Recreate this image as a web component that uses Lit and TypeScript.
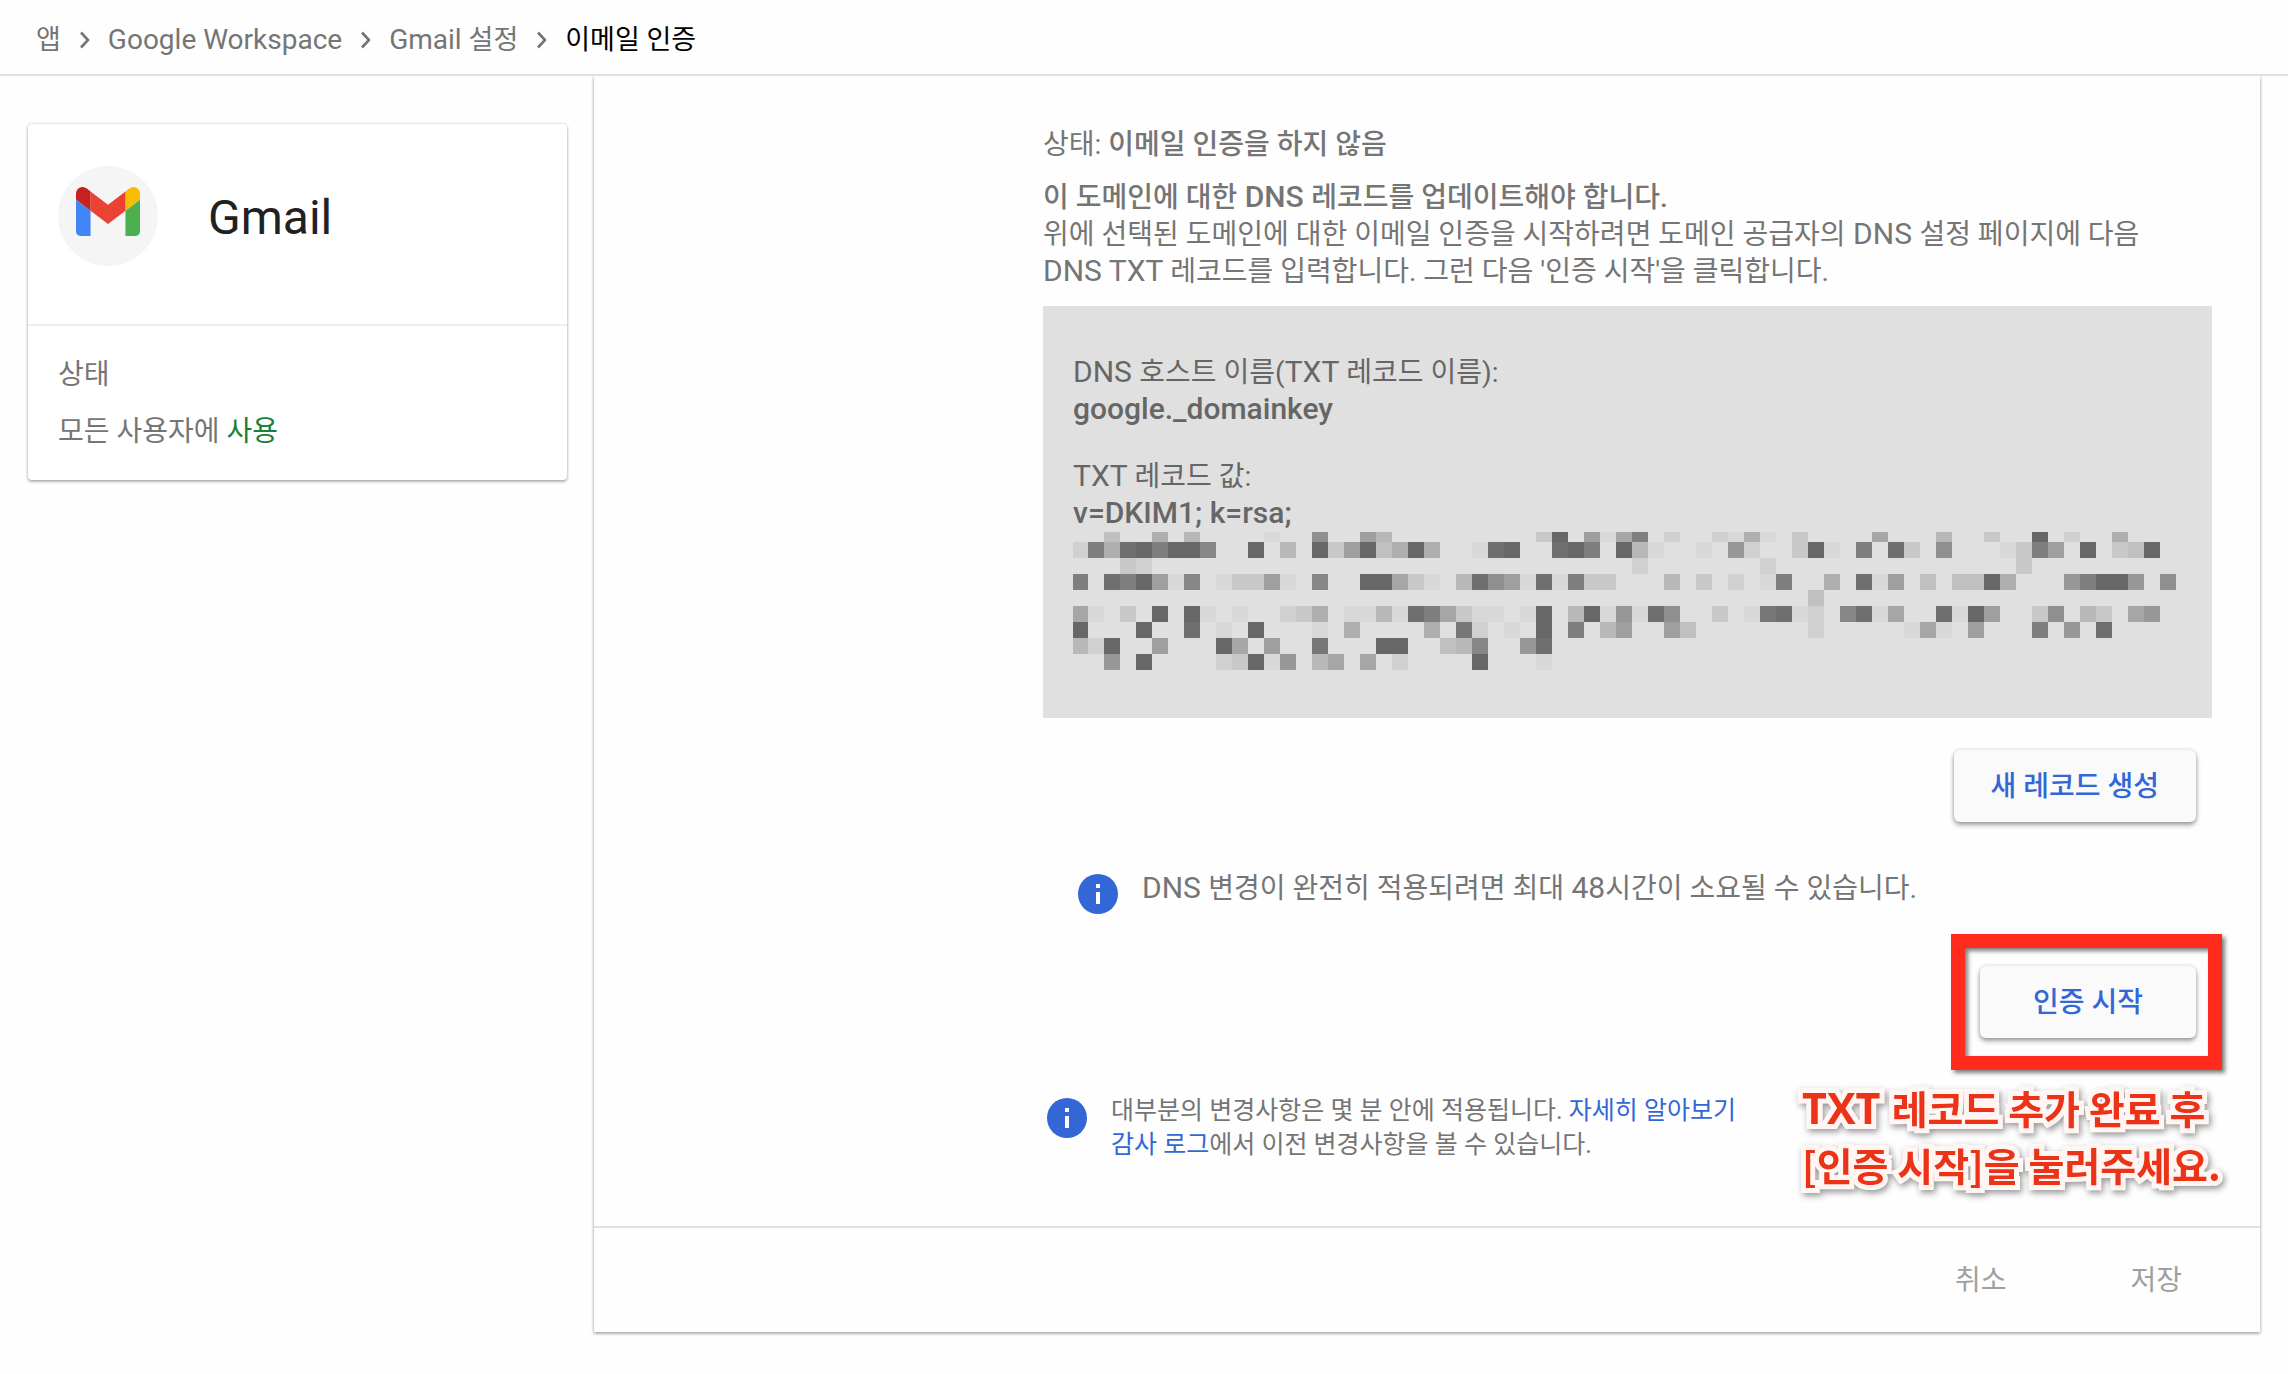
import { LitElement, html, svg, css } from "lit";
import { customElement, property } from "lit/decorators.js";

/* Wraps every Latin run, with the spaces beside it, so that it is set a step larger than the Hangul. */
const mixed = (text: string) =>
  text
    .split(/( ?[A-Za-z0-9](?:[A-Za-z0-9._=; ]*[A-Za-z0-9._=;])? ?)/)
    .map((part, i) => (i % 2 ? html`<span class="latin">${part}</span>` : part));

const CELL = 16;

/* Each row of the mosaic: its top, its height, and "column:darkness" cells (darkness in hex). */
const MOSAIC: Array<[number, number, string]> = [
  [0, 10, "2:4 5:6 7:5 12:1 15:a 18:8 19:5 29:3 30:f 32:8 33:1 34:7 35:c 37:2 40:2 41:1 42:6 43:1 45:3 50:7 54:5 57:3 60:f 62:2 65:6"],
  [10, 16, "0:2 1:c 2:6 3:e 4:f 5:c 6:f 7:f 8:b 11:f 13:5 15:f 16:3 17:8 18:f 19:4 20:6 21:f 22:6 25:1 26:e 27:f 30:e 31:f 32:c 34:f 35:5 36:1 39:1 41:9 42:2 45:3 46:f 47:1 49:c 51:e 52:3 54:a 58:1 59:3 60:c 61:8 63:f 65:3 66:4 67:f"],
  [26, 16, "3:3 4:2 35:2 43:2 59:3"],
  [42, 16, "0:c 2:e 3:c 4:f 5:8 6:1 7:b 9:1 10:3 11:3 12:8 13:1 15:b 18:f 19:f 20:7 21:3 22:1 24:5 25:e 26:a 27:8 28:1 29:e 30:1 31:c 32:3 33:3 37:5 39:3 41:2 43:1 44:c 47:6 49:e 50:1 51:8 53:4 55:4 56:4 57:f 58:6 62:9 63:c 64:f 65:f 66:9 68:a"],
  [58, 16, "46:4"],
  [74, 16, "0:7 1:1 3:3 5:f 7:f 8:1 10:1 13:2 14:3 15:6 17:1 18:1 19:5 20:1 21:e 22:c 23:7 24:3 25:1 26:1 28:1 29:f 31:5 32:f 33:1 34:9 35:1 36:e 37:a 40:3 42:1 43:d 44:e 45:1 46:2 48:b 49:e 50:1 51:7 54:e 55:1 56:f 57:8 60:3 61:a 63:5 64:3 66:7 67:9"],
  [90, 16, "0:f 4:f 7:e 9:1 11:f 15:1 17:6 22:6 24:d 25:2 27:1 29:f 31:c 33:5 34:8 37:8 38:4 46:2 52:1 53:7 54:1 56:8 60:c 62:9 64:e"],
  [106, 16, "0:5 1:2 2:f 5:8 9:f 10:7 12:8 15:d 19:f 20:f 23:4 24:5 25:b 28:9 29:e"],
  [122, 16, "2:9 4:f 9:2 10:3 11:f 12:1 13:9 15:5 16:7 18:7 20:2 25:f 29:1"],
];

const shade = (level: string) => {
  const v = Math.round(224 - parseInt(level, 16) * 8.1);
  return `rgb(${v},${v},${v})`;
};

const base = css`
  * {
    box-sizing: border-box;
  }
  p,
  h1,
  h2 {
    margin: 0;
    font-weight: 400;
    font-size: inherit;
  }
  .latin {
    font-size: 30px;
    line-height: 0;
  }
  a {
    color: #3367d6;
    text-decoration: none;
  }
  svg {
    display: block;
    flex: none;
  }
`;

@customElement("crumb-bar")
class CrumbBar extends LitElement {
  static styles = [
    base,
    css`
      :host {
        display: block;
        position: relative;
        z-index: 1;
        background: #fefefe;
        border-bottom: 2px solid #e0e0e0;
      }
      .list {
        display: flex;
        align-items: center;
        gap: 18px;
        height: 74px;
        margin: 0;
        padding: 6px 36px 0;
        list-style: none;
        font-size: 27px;
        line-height: 36px;
      }
      .item {
        display: flex;
        align-items: center;
        gap: 18px;
      }
      .link {
        color: #757575;
      }
      .latin {
        font-size: 28px;
      }
      .current {
        color: #000;
      }
    `,
  ];

  render() {
    const chevron = html`<svg width="11" height="18" viewBox="0 0 11 18" aria-hidden="true">
      <path d="M2 1.5 9 9l-7 7.5" fill="none" stroke="#757575" stroke-width="2.6" />
    </svg>`;
    return html`<nav aria-label="탐색 경로">
      <ol class="list">
        ${["앱", "Google Workspace", "Gmail 설정"].map(
          (name) => html`<li class="item"><a class="link" href="#">${mixed(name)}</a>${chevron}</li>`
        )}
        <li class="current" aria-current="page">이메일 인증</li>
      </ol>
    </nav>`;
  }
}

@customElement("app-card")
class AppCard extends LitElement {
  static styles = [
    base,
    css`
      :host {
        display: block;
        border-radius: 4px;
        background: #fff;
        box-shadow: 0 0 3px rgba(0, 0, 0, 0.22), 0 2px 3px rgba(0, 0, 0, 0.26);
      }
      .head {
        display: flex;
        align-items: flex-start;
        gap: 50px;
        height: 202px;
        padding: 42px 30px 0;
        border-bottom: 2px solid #eee;
      }
      .logo {
        display: grid;
        justify-items: center;
        width: 100px;
        height: 100px;
        padding-top: 21px;
        border-radius: 50%;
        background: #f5f5f5;
      }
      .name {
        font-size: 48px;
        line-height: 104px;
        color: #212121;
      }
      .body {
        display: flex;
        flex-direction: column;
        gap: 20px;
        padding: 30px;
      }
      .on {
        color: #188038;
      }
    `,
  ];

  render() {
    return html`<div class="head">
        <div class="logo">
          <svg width="64" height="49" viewBox="52 42 88 66" role="img" aria-label="Gmail" preserveAspectRatio="none">
            <path fill="#4285f4" d="M58 108h14V74L52 59v43c0 3.32 2.69 6 6 6" />
            <path fill="#4caf50" d="M120 108h14c3.32 0 6-2.69 6-6V59l-20 15" />
            <path fill="#f9bc05" d="M120 48v26l20-15v-8c0-7.42-8.47-11.65-14.4-7.2" />
            <path fill="#ea4335" d="M72 74V48l24 18 24-18v26L96 92" />
            <path fill="#c5221f" d="M52 51v8l20 15V48l-5.6-4.2c-5.94-4.45-14.4-.22-14.4 7.2" />
          </svg>
        </div>
        <h1 class="name">Gmail</h1>
      </div>
      <div class="body">
        <p>상태</p>
        <p>모든 사용자에 <span class="on">사용</span></p>
      </div>`;
  }
}

@customElement("info-note")
class InfoNote extends LitElement {
  static styles = [
    base,
    css`
      :host {
        display: flex;
        align-items: flex-start;
        gap: 20px;
        line-height: 34px;
      }
    `,
  ];

  render() {
    return html`<svg width="48" height="48" viewBox="0 0 24 24" aria-hidden="true">
        <circle cx="12" cy="12" r="10" fill="#3367d6" />
        <path fill="#fff" d="M11 7h2v2h-2zM11 11h2v6h-2z" />
      </svg>
      <div><slot></slot></div>`;
  }
}

@customElement("dns-record")
class DnsRecord extends LitElement {
  @property() host = "";
  @property() value = "";

  static styles = [
    base,
    css`
      :host {
        display: block;
        padding: 48px 30px;
        background: #e0e0e0;
        color: #666;
      }
      .pair {
        margin: 0 0 30px;
      }
      .pair:last-of-type {
        margin-bottom: 0;
      }
      .data {
        margin: 0;
        font-weight: 500;
      }
      .mosaic {
        max-width: 100%;
      }
    `,
  ];

  render() {
    return html`<dl class="pair">
        <dt>${mixed("DNS 호스트 이름(TXT 레코드 이름):")}</dt>
        <dd class="data">${mixed(this.host)}</dd>
      </dl>
      <dl class="pair">
        <dt>${mixed("TXT 레코드 값:")}</dt>
        <dd class="data">${mixed(this.value)}</dd>
      </dl>
      <svg class="mosaic" width="1103" height="138" viewBox="1 0 1103 138" shape-rendering="crispEdges" aria-hidden="true">
        ${MOSAIC.map(([y, h, cells]) =>
          cells.split(" ").map((cell) => {
            const [col, level] = cell.split(":");
            return svg`<rect x=${Number(col) * CELL} y=${y} width=${CELL} height=${h} fill=${shade(level)} />`;
          })
        )}
      </svg>`;
  }
}

@customElement("app-root")
class AppRoot extends LitElement {
  static styles = [
    base,
    css`
      :host {
        display: block;
        min-height: 100vh;
        background: #fefefe;
        color: #757575;
        font: 400 28px/37px Roboto, "Noto Sans CJK KR", sans-serif;
      }
      .page {
        display: grid;
        grid-template-columns: 539px minmax(0, 1fr);
        align-items: start;
        gap: 27px;
        padding: 0 28px 42px;
      }
      .side {
        padding-top: 48px;
      }
      .panel {
        background: #fefefe;
        box-shadow: 0 0 3px rgba(0, 0, 0, 0.22), 0 2px 3px rgba(0, 0, 0, 0.26);
      }
      .content {
        padding: 50px 48px 64px 449px;
      }
      .strong {
        font-weight: 500;
      }
      .intro {
        margin: 16px 0;
        padding-right: 40px;
      }
      .actions {
        display: flex;
        justify-content: flex-end;
        padding: 32px 16px 48px 0;
      }
      .raised {
        min-width: 216px;
        height: 72px;
        padding: 0 37px;
        border: 0;
        border-radius: 6px;
        background: #fafafa;
        color: #3367d6;
        font: inherit;
        font-weight: 500;
        box-shadow: 0 0 4px rgba(0, 0, 0, 0.14), 0 3px 5px rgba(0, 0, 0, 0.36);
      }
      .inset {
        padding-left: 31px;
        line-height: 37px;
      }
      .marked {
        padding-top: 48px;
        padding-bottom: 56px;
      }
      .target {
        position: relative;
      }
      .frame {
        position: absolute;
        inset: -32px -26px -32px -29px;
        border: 14px solid #ff2b1c;
        filter: drop-shadow(3px 3px 2px rgba(0, 0, 0, 0.5));
        pointer-events: none;
      }
      .callout {
        position: absolute;
        top: 113px;
        right: -26px;
        width: 420px;
        color: #ec3217;
        font-family: "Noto Sans CJK KR", sans-serif;
        font-size: 39px;
        font-weight: 700;
        line-height: 57px;
        white-space: nowrap;
        -webkit-text-stroke: 10px #fff5f3;
        paint-order: stroke fill;
        stroke-linejoin: round;
        filter: drop-shadow(2px 3px 3px rgba(0, 0, 0, 0.4));
      }
      .callout .latin {
        font-family: "Open Sans", "Noto Sans CJK KR", sans-serif;
        font-size: 43px;
      }
      .small {
        font-size: 25px;
      }
      .footer {
        display: flex;
        justify-content: flex-end;
        align-items: center;
        gap: 44px;
        height: 106px;
        padding-right: 38px;
        border-top: 2px solid #e0e0e0;
      }
      .flat {
        padding: 14px 40px;
        border: 0;
        background: none;
        color: #a0a0a0;
        font: inherit;
      }
    `,
  ];

  render() {
    return html`<crumb-bar></crumb-bar>
      <div class="page">
        <aside class="side"><app-card></app-card></aside>
        <main class="panel">
          <div class="content">
            <p>상태: <span class="strong">이메일 인증을 하지 않음</span></p>
            <div class="intro">
              <h2 class="strong">${mixed("이 도메인에 대한 DNS 레코드를 업데이트해야 합니다.")}</h2>
              <p>
                ${mixed(
                  "위에 선택된 도메인에 대한 이메일 인증을 시작하려면 도메인 공급자의 DNS 설정 페이지에 다음 DNS TXT 레코드를 입력합니다. 그런 다음 '인증 시작'을 클릭합니다."
                )}
              </p>
            </div>
            <dns-record host="google._domainkey" value="v=DKIM1; k=rsa;"></dns-record>
            <div class="actions"><button class="raised" type="button">새 레코드 생성</button></div>
            <info-note class="inset">${mixed("DNS 변경이 완전히 적용되려면 최대 48시간이 소요될 수 있습니다.")}</info-note>
            <div class="actions marked">
              <div class="target">
                <button class="raised" type="button">인증 시작</button>
                <div class="frame"></div>
                <div class="callout">
                  ${mixed("TXT 레코드 추가 완료 후")}<br />[인증 시작]을 눌러주세요.
                </div>
              </div>
            </div>
            <info-note class="small">
              대부분의 변경사항은 몇 분 안에 적용됩니다. <a href="#">자세히 알아보기</a><br />
              <a href="#">감사 로그</a>에서 이전 변경사항을 볼 수 있습니다.
            </info-note>
          </div>
          <footer class="footer">
            <button class="flat" type="button">취소</button>
            <button class="flat" type="button">저장</button>
          </footer>
        </main>
      </div>`;
  }
}
